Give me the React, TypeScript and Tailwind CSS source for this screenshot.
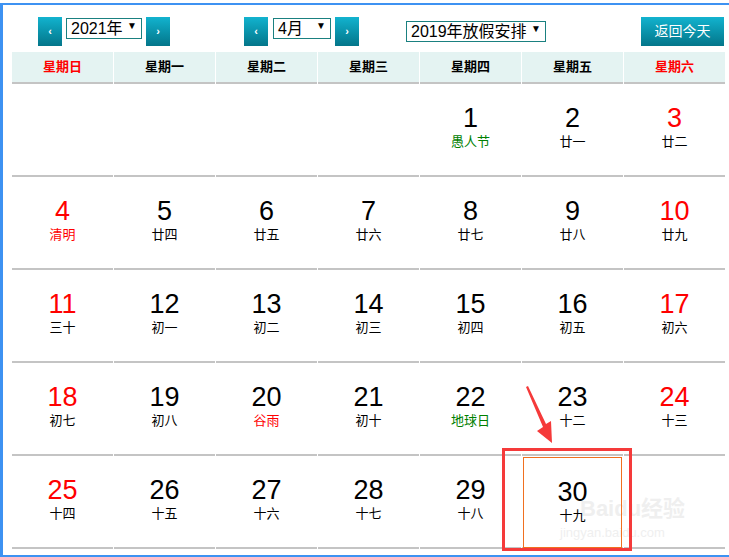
import React from "react";

type Day = { d: number; l: string; red?: boolean; lc?: string; today?: boolean };

const weeks: (Day | null)[][] = [
  [null, null, null, null, { d: 1, l: "愚人节", lc: "text-[#008000]" }, { d: 2, l: "廿一" }, { d: 3, l: "廿二", red: true }],
  [
    { d: 4, l: "清明", red: true, lc: "text-[#ff0000]" },
    { d: 5, l: "廿四" },
    { d: 6, l: "廿五" },
    { d: 7, l: "廿六" },
    { d: 8, l: "廿七" },
    { d: 9, l: "廿八" },
    { d: 10, l: "廿九", red: true },
  ],
  [
    { d: 11, l: "三十", red: true },
    { d: 12, l: "初一" },
    { d: 13, l: "初二" },
    { d: 14, l: "初三" },
    { d: 15, l: "初四" },
    { d: 16, l: "初五" },
    { d: 17, l: "初六", red: true },
  ],
  [
    { d: 18, l: "初七", red: true },
    { d: 19, l: "初八" },
    { d: 20, l: "谷雨", lc: "text-[#ff0000]" },
    { d: 21, l: "初十" },
    { d: 22, l: "地球日", lc: "text-[#008000]" },
    { d: 23, l: "十二" },
    { d: 24, l: "十三", red: true },
  ],
  [
    { d: 25, l: "十四", red: true },
    { d: 26, l: "十五" },
    { d: 27, l: "十六" },
    { d: 28, l: "十七" },
    { d: 29, l: "十八" },
    { d: 30, l: "十九", today: true },
    null,
  ],
];

const weekdays = ["星期日", "星期一", "星期二", "星期三", "星期四", "星期五", "星期六"];

const NavBtn = ({ dir }: { dir: string }) => (
  <button className="flex h-[29px] w-[24px] items-center justify-center bg-gradient-to-b from-[#12b3cf] to-[#04768a] text-[11px] font-bold text-white">
    {dir}
  </button>
);

const Select = ({ label, w }: { label: string; w: string }) => (
  <div className={`relative flex h-[21px] items-center border border-[#1a8080] bg-white pl-[4px] text-[16px] leading-none text-black ${w}`}>
    <span>{label}</span>
    <span className="absolute right-[4px] top-[2px] text-[10px]">▼</span>
  </div>
);

const App = () => {
  return (
    <div className="relative h-[557px] w-[729px] overflow-hidden bg-white font-['Liberation_Sans','Noto_Sans_CJK_SC',sans-serif]">
      {/* watermark, behind the calendar */}
      <div className="absolute left-[580px] top-[498px] z-0 text-[22px] font-bold leading-none text-[#efefef]">Baidu经验</div>
      <div className="absolute left-[560px] top-[526px] z-0 text-[13px] leading-none text-[#efefef]">jingyan.baidu.com</div>

      <div className="relative z-10 mt-[3px] h-[554px] border-b-[2px] border-l-[3px] border-t-[2px] border-[#3d92f2] pl-[9px]">
        {/* toolbar */}
        <div className="flex h-[47px] items-start pt-[12px]">
          <div className="ml-[26px] flex items-start gap-[4px]">
            <NavBtn dir="‹" />
            <div className="mt-[1px]">
              <Select label="2021年" w="w-[76px]" />
            </div>
            <NavBtn dir="›" />
          </div>
          <div className="ml-[74px] flex items-start gap-[4px]">
            <NavBtn dir="‹" />
            <div className="ml-[1px] mt-[1px]">
              <Select label="4月" w="w-[58px]" />
            </div>
            <NavBtn dir="›" />
          </div>
          <div className="ml-[47px] mt-[4px]">
            <Select label="2019年放假安排" w="w-[140px]" />
          </div>
          <button className="ml-[95px] flex h-[29px] w-[83px] items-center justify-center bg-gradient-to-b from-[#12b3cf] to-[#04768a] text-[14px] text-white">
            返回今天
          </button>
        </div>

        {/* weekday header */}
        <div className="grid w-[713px] grid-cols-7 gap-x-[1px]">
          {weekdays.map((w, i) => (
            <div
              key={w}
              className={`flex h-[32px] items-center justify-center border-b-[2px] border-[#c4c4c4] bg-[#e4f3f2] text-[13px] font-bold ${
                i === 0 || i === 6 ? "text-[#ff0000]" : "text-black"
              }`}
            >
              {w}
            </div>
          ))}
        </div>

        {/* days */}
        <div className="grid w-[713px] grid-cols-7 gap-x-[1px]">
          {weeks.flat().map((c, i) => (
            <div key={i} className="h-[93px] border-b-[2px] border-[#c4c4c4]">
              {c && (
                <div
                  className={`flex h-full flex-col items-center pt-[18px] ${
                    c.today ? "mx-[1px] mt-[1px] h-[89px] border border-[#f07020] pt-[17px]" : ""
                  }`}
                >
                  <span className={`text-[27px] leading-[32px] ${c.red ? "text-[#ff0000]" : "text-black"}`}>{c.d}</span>
                  <span className={`text-[13px] leading-[16px] ${c.lc ?? "text-black"}`}>{c.l}</span>
                </div>
              )}
            </div>
          ))}
        </div>
      </div>

      {/* annotation: red box + arrow */}
      <div className="absolute left-[502px] top-[448px] z-20 h-[103px] w-[130px] border-[3px] border-[#f53a3a]" />
      <svg className="absolute left-0 top-0 z-20" width="729" height="557" viewBox="0 0 729 557">
        <polygon points="526,387 528,386 546,424 551,421 552,443 537,431 543,427" fill="#f53a3a" />
      </svg>
    </div>
  );
};

export default App;
